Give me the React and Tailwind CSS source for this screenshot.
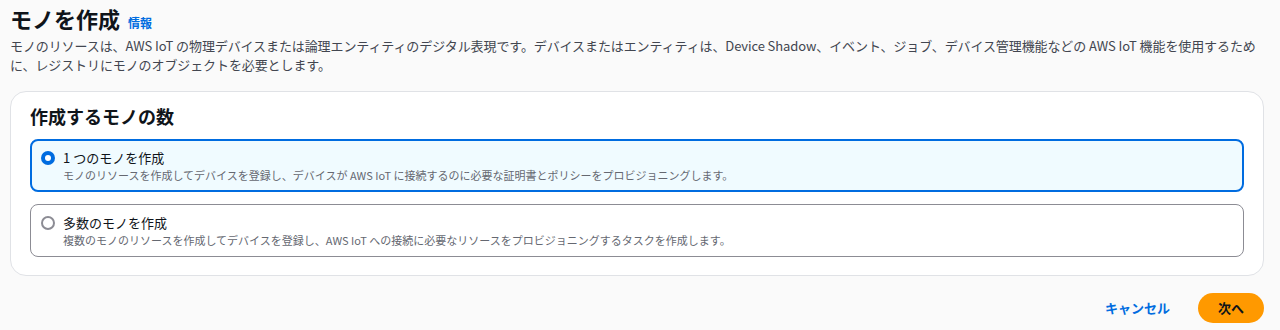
export default function App() {
  return (
    <div className="min-h-[330px] bg-[#fafafa] px-[10px] pt-[3px] font-['Noto_Sans_CJK_JP','Noto_Sans',sans-serif] text-[#0f141a]">
      <div className="flex items-baseline gap-[8px]">
        <h1 className="text-[22px] font-bold leading-[30px]">モノを作成</h1>
        <a href="#" className="text-[12px] font-bold text-[#006ce0]">情報</a>
      </div>
      <p className="mt-[3px] pr-[4px] text-[13px] leading-[19px] tracking-[-0.1px] text-[#424650]">
        モノのリソースは、AWS IoT の物理デバイスまたは論理エンティティのデジタル表現です。デバイスまたはエンティティは、Device Shadow、イベント、ジョブ、デバイス管理機能などの AWS IoT 機能を使用するために、レジストリにモノのオブジェクトを必要とします。
      </p>

      <div className="mt-[17px] mr-[6px] rounded-[16px] border border-[#e0e2e6] bg-white px-[19px] pt-[12px] pb-[18px]">
        <h2 className="text-[18px] font-bold leading-[24px]">作成するモノの数</h2>
        <div className="mt-[11px] flex flex-col gap-[12px]">
          <label className="flex gap-[8px] rounded-[8px] border-2 border-[#006ce0] bg-[#f0fbff] px-[9px] py-[7px]">
            <span className="mt-[3px] flex h-[14px] w-[14px] shrink-0 items-center justify-center rounded-full bg-[#006ce0]">
              <span className="h-[6px] w-[6px] rounded-full bg-white" />
            </span>
            <span className="flex flex-col">
              <span className="text-[13px] leading-[19px]">1 つのモノを作成</span>
              <span className="text-[11px] leading-[16px] text-[#656871]">
                モノのリソースを作成してデバイスを登録し、デバイスが AWS IoT に接続するのに必要な証明書とポリシーをプロビジョニングします。
              </span>
            </span>
          </label>
          <label className="flex gap-[8px] rounded-[8px] border border-[#8c8c94] bg-white px-[10px] py-[8px]">
            <span className="mt-[3px] h-[14px] w-[14px] shrink-0 rounded-full border-2 border-[#8c8c94] bg-white" />
            <span className="flex flex-col">
              <span className="text-[13px] leading-[19px]">多数のモノを作成</span>
              <span className="text-[11px] leading-[16px] text-[#656871]">
                複数のモノのリソースを作成してデバイスを登録し、AWS IoT への接続に必要なリソースをプロビジョニングするタスクを作成します。
              </span>
            </span>
          </label>
        </div>
      </div>

      <div className="mt-[17px] mr-[6px] flex items-center justify-end gap-[28px]">
        <button className="text-[13px] font-bold text-[#006ce0]">キャンセル</button>
        <button className="h-[30px] rounded-full bg-[#ff9900] px-[20px] text-[13px] font-bold text-[#0f141a]">次へ</button>
      </div>
    </div>
  );
}
